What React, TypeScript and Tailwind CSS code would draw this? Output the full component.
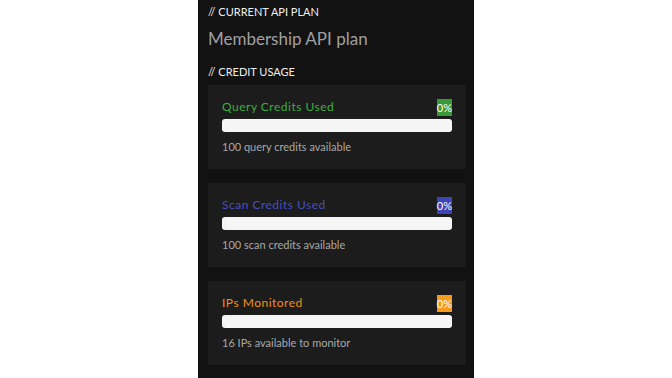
import React from 'react';

const USAGE = [
  { label: 'Query Credits Used', text: 'text-[#3fae3f]', badge: 'bg-[#3a9a3a]', note: '100 query credits available' },
  { label: 'Scan Credits Used', text: 'text-[#4450c0]', badge: 'bg-[#3b45b5]', note: '100 scan credits available' },
  { label: 'IPs Monitored', text: 'text-[#f0901a]', badge: 'bg-[#f59a1c]', note: '16 IPs available to monitor' },
];

const UsageCard = ({ item }: { item: (typeof USAGE)[number] }) => (
  <div className="bg-[#1c1c1c] px-[14px] pt-[14px] pb-[15px]">
    <div className="flex items-end justify-between">
      <span className={`text-[12px] tracking-[0.5px] leading-[16px] pb-[1px] ${item.text}`}>{item.label}</span>
      <span className={`${item.badge} text-white text-[11px] leading-[17px]`}>0%</span>
    </div>
    <div className="mt-[3px] h-[13px] rounded-[3px] bg-[#f5f5f5]" />
    <p className="mt-[8px] text-[11px] leading-[14px] text-[#a8a8a8]">{item.note}</p>
  </div>
);

export default function App() {
  return (
    <div className="w-[672px] h-[378px] bg-white flex justify-center overflow-hidden" style={{ fontFamily: 'Lato, "Noto Sans", sans-serif' }}>
      <div className="w-[276px] h-full bg-[#121212] pl-[10px] pr-[8px] pt-[5px]">
        <h3 className="text-[11px] leading-[14px] text-[#eeeeee] uppercase">// Current API Plan</h3>
        <h2 className="mt-[10px] text-[17px] leading-[20px] text-[#a0a0a0]">Membership API plan</h2>
        <h3 className="mt-[16px] text-[11px] leading-[14px] text-[#eeeeee] uppercase">// Credit Usage</h3>
        <div className="mt-[6px] flex flex-col gap-[14px]">
          {USAGE.map((u) => (
            <UsageCard key={u.label} item={u} />
          ))}
        </div>
      </div>
    </div>
  );
}
